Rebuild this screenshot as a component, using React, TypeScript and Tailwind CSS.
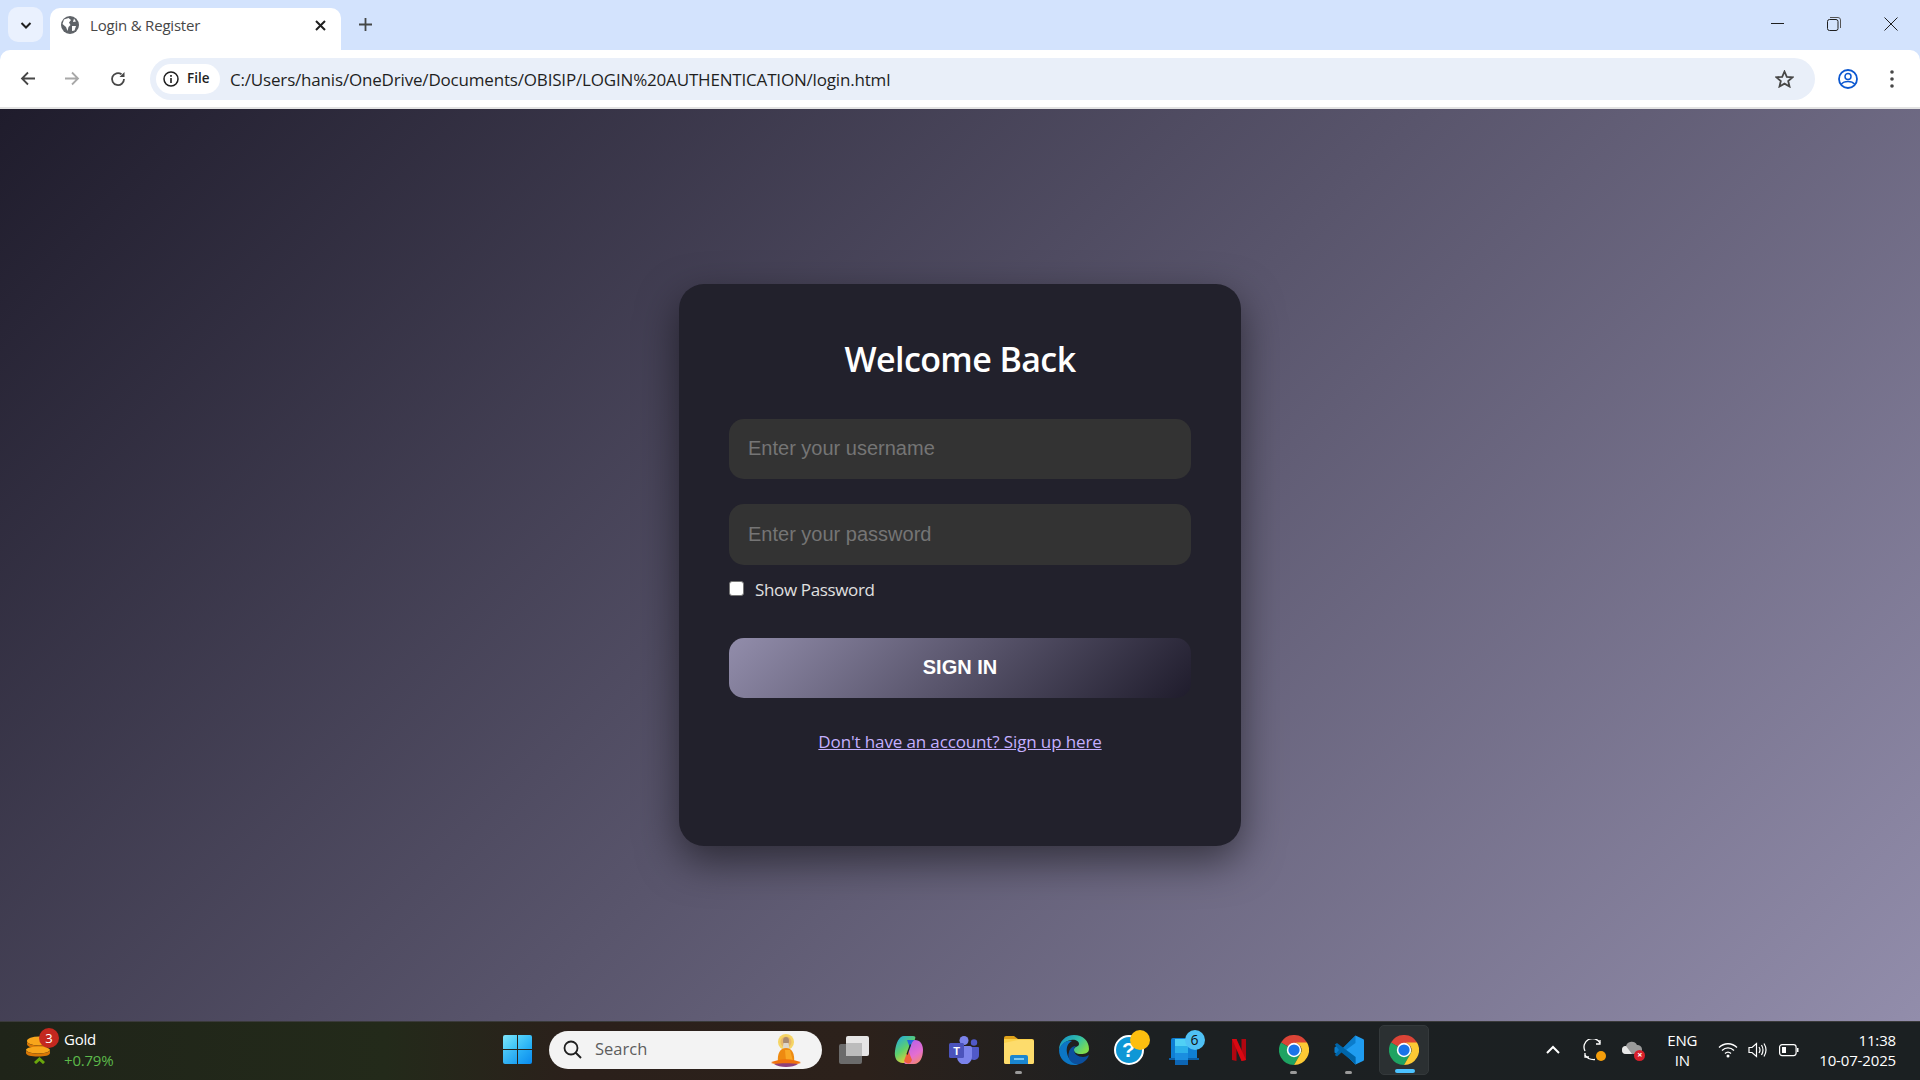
import React from "react";

const UI = "font-['Open_Sans','Noto_Sans',sans-serif]";

function ChromeIcon() {
  return (
    <svg width="30" height="30" viewBox="0 0 48 48">
      <path d="M24 24 L44.8 12 A24 24 0 0 0 3.2 12 Z" fill="#db4437" />
      <path d="M24 24 L3.2 12 A24 24 0 0 0 24 48 L36 27 Z" fill="#1ea362" />
      <path d="M24 12 L44.8 12 A24 24 0 0 1 24 48 L34.4 30 A12 12 0 0 0 24 12 Z" fill="#fcc934" />
      <circle cx="24" cy="24" r="11.5" fill="#fff" />
      <circle cx="24" cy="24" r="9" fill="#1a73e8" />
    </svg>
  );
}

function FolderIcon() {
  return (
    <svg width="30" height="28" viewBox="0 0 30 28">
      <path d="M0 2 a2 2 0 0 1 2-2 h8 l4 3 h-14z" fill="#e0a31b" />
      <path d="M0 3 h28 a2 2 0 0 1 2 2 v21 a2 2 0 0 1-2 2 h-26 a2 2 0 0 1-2-2z" fill="#fbd14b" />
      <path d="M0 7 l14-3 h14 a2 2 0 0 1 2 2 v20 a2 2 0 0 1-2 2 h-26 a2 2 0 0 1-2-2z" fill="#fddc6c" />
      <path d="M6 28 v-7 a2 2 0 0 1 2-2 h14 a2 2 0 0 1 2 2 v7z" fill="#1a86d0" />
      <rect x="10" y="22" width="10" height="2" fill="#7cc8f2" />
    </svg>
  );
}

function EdgeIcon() {
  return (
    <svg width="30" height="30" viewBox="0 0 30 30">
      <defs>
        <linearGradient id="edgeA" x1="0" y1="0" x2="1" y2="0.6">
          <stop offset="0" stopColor="#0f8bd0" />
          <stop offset="0.6" stopColor="#35c1a5" />
          <stop offset="1" stopColor="#7fdc4f" />
        </linearGradient>
      </defs>
      <path d="M15 0 C24 0 30 6 30 14 C30 18 26 19 22 19 C17 19 15 17 15 15 C15 11 20 12 20 9 C20 6 16 4 12 5 C6 6 2 10 0 15 C0 6 7 0 15 0Z" fill="url(#edgeA)" />
      <path d="M0 15 C2 8 8 5 13 6 C9 8 7 12 8 18 C9 24 14 29 20 29 C18 30 16 30 15 30 C6 30 0 23 0 15Z" fill="#0c76c4" />
      <path d="M15 15 C15 19 19 22 24 22 C26 22 28 21 30 20 C28 26 22 30 17 29 C11 28 8 22 10 17 C11 13 14 11 17 11 C15 12 15 14 15 15Z" fill="#0b4f9e" />
    </svg>
  );
}

function HelpIcon() {
  return (
    <div className="relative w-[30px] h-[30px]">
      <div className="w-[30px] h-[30px] rounded-full border-2 border-white bg-[#0e97d6] flex items-center justify-center text-white font-bold text-[21px] leading-none font-['Liberation_Sans',sans-serif]">?</div>
      <div className="absolute -top-[5px] left-[16px] w-5 h-5 rounded-full bg-[#fdbe0f]" />
    </div>
  );
}

function MailIcon() {
  return (
    <div className="relative w-[30px] h-[30px]">
      <svg width="30" height="30" viewBox="0 0 30 30">
        <rect x="2" y="3" width="26" height="22" rx="2" fill="#0f7fd4" />
        <rect x="0" y="23" width="30" height="2" fill="#0a5fa8" />
        <rect x="6" y="4" width="13" height="7" fill="#50d0f5" />
        <rect x="6" y="11" width="13" height="7" fill="#2bb0ea" />
        <rect x="6" y="18" width="13" height="7" fill="#1a8ee0" />
        <rect x="6" y="25" width="13" height="5" fill="#0d66b5" />
      </svg>
      <div className="absolute -top-[5px] left-[16px] w-5 h-5 rounded-full bg-[#4fc1f5] text-[#111] text-[14px] leading-5 text-center font-['Open_Sans',sans-serif]">6</div>
    </div>
  );
}

function NetflixIcon() {
  return (
    <svg width="14" height="22" viewBox="0 0 14 22">
      <path d="M0 0 h4.5 v22 l-4.5 -1z" fill="#b00610" />
      <path d="M9.5 0 h4.5 v21 l-4.5 1z" fill="#b00610" />
      <path d="M0 0 h4.5 L14 21 l-4.5 1z" fill="#d90812" />
    </svg>
  );
}

function VSCodeIcon() {
  return (
    <svg width="30" height="30" viewBox="0 0 30 30">
      <path d="M21.5 0.5 L29 4 a1.5 1.5 0 0 1 1 1.4 v19.2 a1.5 1.5 0 0 1-1 1.4 L21.5 29.5 L7 15z" fill="#1f9cf0" />
      <path d="M21.5 0.5 L7 15 L2.5 11 L0.5 12.5 v5 L2.5 19 L7 15 L21.5 29.5 V22 L12 15 L21.5 8z" fill="#0a7ccb" />
      <path d="M0.8 9.5 L3 8 L21.5 22 V29.5 L18 26 L7.5 17.5 L3 21.5 L0.8 20 L5 15z" fill="#0065a9" />
    </svg>
  );
}

function TaskViewIcon() {
  return (
    <div className="relative w-[30px] h-[28px]">
      <div className="absolute left-0 bottom-0 w-[23px] h-[20px] rounded-[2px] bg-[#6b6b6b]" />
      <div className="absolute right-0 top-0 w-[23px] h-[20px] rounded-[2px] bg-[#f0f0f0] opacity-95" />
      <div className="absolute left-[7px] top-[7px] w-[16px] h-[13px] bg-[#bcbcbc]" />
    </div>
  );
}

function CopilotIcon() {
  return (
    <svg width="30" height="28" viewBox="0 0 30 28">
      <defs>
        <linearGradient id="coA" x1="0" y1="0" x2="0.6" y2="1">
          <stop offset="0" stopColor="#1aa5ef" />
          <stop offset="0.55" stopColor="#5fd06a" />
          <stop offset="1" stopColor="#f8d030" />
        </linearGradient>
        <linearGradient id="coB" x1="0.3" y1="0" x2="0.8" y2="1">
          <stop offset="0" stopColor="#b760e8" />
          <stop offset="0.6" stopColor="#e56ed0" />
          <stop offset="1" stopColor="#f48a66" />
        </linearGradient>
      </defs>
      <path d="M10 0 h9 c2 0 3 1 2 3 L14 24 c-1 3-2 3-5 3 C3 27 0 22 1 15 C2 7 5 0 10 0Z" fill="url(#coA)" />
      <path d="M19 4 h2 c5 0 8 4 8 10 c0 7-3 14-9 14 h-8 c-2 0-2-2-1-3 L19 4Z" fill="url(#coB)" />
      <path d="M14 14 l-4 11 c2 3 6 3 7 1 l1-2z" fill="#f0603c" />
      <path d="M13 4 h9 c-3 0-4 2-5 5 l-1 3z" fill="#2266dd" />
      <path d="M17 9 L13.500 19 L12.500 18 L16 8z" fill="#1c1f22" />
    </svg>
  );
}

function TeamsIcon() {
  return (
    <svg width="30" height="28" viewBox="0 0 30 28">
      <circle cx="15" cy="4.5" r="4.5" fill="#7b83eb" />
      <circle cx="25" cy="6.5" r="3.2" fill="#5059c9" />
      <path d="M21 11 h8 a1 1 0 0 1 1 1 v7 a5 5 0 0 1-9 3z" fill="#5059c9" />
      <path d="M8 10 h13 a2 2 0 0 1 2 2 v9 a7.500 7.500 0 0 1-15 0z" fill="#7b83eb" />
      <rect x="0" y="7" width="15" height="15" rx="1.500" fill="#4b53bc" />
      <text x="7.500" y="18.500" textAnchor="middle" fontSize="11" fontWeight="700" fill="#fff" fontFamily="Liberation Sans">T</text>
    </svg>
  );
}

function WindowsLogo() {
  return (
    <div className="grid grid-cols-2 gap-[1.500px] w-[29px] h-[29px]">
      <div className="bg-[linear-gradient(135deg,#7fe5fb,#35c0f5)] rounded-tl-[2px]" />
      <div className="bg-[linear-gradient(135deg,#58d4fa,#1ba9f5)] rounded-tr-[2px]" />
      <div className="bg-[linear-gradient(135deg,#4dc8f8,#1c9ff0)] rounded-bl-[2px]" />
      <div className="bg-[linear-gradient(135deg,#2db5f7,#0a8aee)] rounded-br-[2px]" />
    </div>
  );
}

function MonkIcon() {
  return (
    <svg width="32" height="35" viewBox="0 0 32 35">
      <circle cx="16" cy="9" r="8" fill="#f5d565" />
      <circle cx="16" cy="9" r="5.500" fill="#e9b86a" />
      <ellipse cx="16" cy="8" rx="3" ry="4" fill="#a98a72" />
      <path d="M13.500 10 h5 l1 7 h-7z" fill="#ddd6cc" />
      <path d="M8 29 C7 21 10 15 16 15 C22 15 25 21 24 29z" fill="#ee8a10" />
      <path d="M15 17 h5 l3 11 h-7z" fill="#f9a825" />
      <path d="M1 30 C8 25 24 25 31 30 C24 32 8 32 1 30Z" fill="#f0720c" />
      <path d="M4 31 C10 30 22 30 28 31 C23 35 9 35 4 31Z" fill="#8c3f7a" />
    </svg>
  );
}

function GoldIcon() {
  return (
    <div className="relative w-[32px] h-[37px]">
      <svg width="26" height="36" viewBox="0 0 26 36" className="absolute left-0 -top-[3px]">
        <ellipse cx="14" cy="13" rx="12" ry="4.500" fill="#f8a51b" />
        <path d="M2 13 v3 c0 2.500 5 4.500 12 4.500 s12-2 12-4.500 v-3 c0 2.500-5 4.500-12 4.500 s-12-2-12-4.500z" fill="#d97706" />
        <ellipse cx="13" cy="22" rx="12" ry="3.500" fill="#f8a51b" />
        <path d="M1 22 v3 c0 2.500 5 3.500 12 3.500 s12-1 12-3.500 v-3 c0 2-5 3.500-12 3.500 s-12-1.500-12-3.500z" fill="#d97706" />
        <path d="M10 35 L14.500 31 L19 35" fill="none" stroke="#6aa70c" strokeWidth="3" />
      </svg>
      <div className="absolute left-[14px] -top-[3px] w-5 h-5 rounded-full bg-[#c4281f] text-white text-[13px] leading-5 text-center">3</div>
    </div>
  );
}

function Cell({ children, dot, active }: { children: React.ReactNode; dot?: boolean; active?: boolean }) {
  return (
    <div className={`relative w-[50px] h-[50px] mx-[2.500px] rounded-[5px] flex items-center justify-center ${active ? "bg-[#2b3032] border border-[#34393b]" : ""}`}>
      {children}
      {dot && <div className="absolute bottom-[1px] left-[21.500px] w-[7px] h-[3px] rounded-full bg-[#9a9a9a]" />}
      {active && <div className="absolute bottom-[1px] left-[15px] w-[20px] h-[3.500px] rounded-full bg-[#4cc2ff]" />}
    </div>
  );
}

export default function App() {
  return (
    <div className={`w-[1920px] h-[1080px] overflow-hidden flex flex-col ${UI}`}>
      {/* Tab strip */}
      <div className="h-[50px] shrink-0 bg-[#d3e3fd] flex items-end relative">
        <div className="w-[35px] h-[35px] ml-2 mb-[8px] rounded-[10px] bg-[#eaf1fe] flex items-center justify-center">
          <svg width="14" height="14" viewBox="0 0 14 14"><path d="M2.500 5 L7 9.500 L11.500 5" fill="none" stroke="#1f1f1f" strokeWidth="2" /></svg>
        </div>
        <div className="w-[291px] h-[42px] ml-[7px] bg-white rounded-t-[10px] flex items-center pl-[11px] pr-[14px] pb-[8px]">
          <svg width="18" height="18" viewBox="0 0 18 18">
            <circle cx="9" cy="9" r="9" fill="#5f6368" />
            <path d="M3 3.500 L7.500 2 L10 4 L8 6.500 L9.500 9 L7.500 11 L6.500 15 L5 11 L1.500 8z M11 10 h4 l-1.500 4.500 L11 15z M13 2.500 l2 3 l-3 .5z" fill="#fff" />
          </svg>
          <span className="ml-[11px] text-[15px] text-[#474747] tracking-[-0.2px]">Login &amp; Register</span>
          <svg className="ml-auto" width="13" height="13" viewBox="0 0 13 13"><path d="M2 2 L11 11 M11 2 L2 11" stroke="#1f1f1f" strokeWidth="2" /></svg>
        </div>
        <svg className="ml-[18px] mb-[19px]" width="13" height="13" viewBox="0 0 13 13"><path d="M6.500 0 V13 M0 6.500 H13" stroke="#444746" strokeWidth="1.800" /></svg>
        <div className="ml-auto h-[50px] flex items-center pr-[22px] gap-[43px] pb-[2px]">
          <svg width="13" height="2" viewBox="0 0 13 2"><rect width="13" height="1" fill="#1f1f1f" /></svg>
          <svg width="14" height="14" viewBox="0 0 14 14"><rect x="0.500" y="2.500" width="10.500" height="11" rx="2" fill="none" stroke="#1f1f1f" /><path d="M3 0.500 H11 a2.500 2.500 0 0 1 2.500 2.500 V11" fill="none" stroke="#555" /></svg>
          <svg width="14" height="14" viewBox="0 0 14 14"><path d="M0.500 0.500 L13.500 13.500 M13.500 0.500 L0.500 13.500" stroke="#1f1f1f" strokeWidth="1" /></svg>
        </div>
      </div>

      {/* Toolbar */}
      <div className="h-[59px] shrink-0 bg-[#d3e3fd]">
        <div className="h-[59px] bg-white rounded-t-[10px] border-b-2 border-[#e3e3e3] flex items-center">
          <div className="w-[150px] flex items-center pl-[20px] gap-[30px]">
            <svg width="15" height="15" viewBox="0 0 15 15"><path d="M15 7.500 H2 M8 1.500 L2 7.500 L8 13.500" fill="none" stroke="#474747" strokeWidth="1.800" /></svg>
            <svg width="15" height="15" viewBox="0 0 15 15"><path d="M0 7.500 H13 M7 1.500 L13 7.500 L7 13.500" fill="none" stroke="#a8a8a8" strokeWidth="1.800" /></svg>
            <svg width="16" height="16" viewBox="0 0 16 16"><path d="M14 8 A6 6 0 1 1 11.500 3.200" fill="none" stroke="#474747" strokeWidth="1.800" /><path d="M14.500 1 V6 H9.500z" fill="#474747" /></svg>
          </div>
          <div className="w-[1665px] h-[42px] rounded-full bg-[#e9eff9] flex items-center pl-[6px]">
            <div className="w-[64px] h-[30px] rounded-full bg-white flex items-center pl-[7px] gap-[8px]">
              <svg width="16" height="16" viewBox="0 0 16 16"><circle cx="8" cy="8" r="7" fill="none" stroke="#1f1f1f" strokeWidth="1.500" /><rect x="7.200" y="7" width="1.600" height="5" fill="#1f1f1f" /><rect x="7.200" y="4" width="1.600" height="1.800" fill="#1f1f1f" /></svg>
              <span className="text-[13.500px] font-semibold text-[#1f1f1f]">File</span>
            </div>
            <span className="ml-[10px] mt-[2px] text-[17px] text-[#1f1f1f] tracking-[-0.18px] whitespace-nowrap">C:/Users/hanis/OneDrive/Documents/OBISIP/LOGIN%20AUTHENTICATION/login.html</span>
            <svg className="ml-auto mr-[21px]" width="19" height="18" viewBox="0 0 19 18"><path d="M9.500 1.500 L11.800 6.800 L17.500 7.300 L13.200 11 L14.500 16.500 L9.500 13.600 L4.500 16.500 L5.800 11 L1.500 7.300 L7.200 6.800z" fill="none" stroke="#474747" strokeWidth="1.800" /></svg>
          </div>
          <svg className="ml-[23px]" width="20" height="20" viewBox="0 0 20 20">
            <circle cx="10" cy="10" r="9" fill="none" stroke="#0b57d0" strokeWidth="1.800" />
            <circle cx="10" cy="7.500" r="3" fill="none" stroke="#0b57d0" strokeWidth="1.500" />
            <path d="M3.500 15 C6 11.500 14 11.500 16.500 15" fill="none" stroke="#0b57d0" strokeWidth="1.500" />
          </svg>
          <svg className="ml-[32px]" width="4" height="18" viewBox="0 0 4 18"><circle cx="2" cy="2" r="1.800" fill="#474747" /><circle cx="2" cy="9" r="1.800" fill="#474747" /><circle cx="2" cy="16" r="1.800" fill="#474747" /></svg>
        </div>
      </div>

      {/* Page */}
      <main className="flex-1 bg-[linear-gradient(135deg,#1f1c2c,#928dab)] flex items-center justify-center">
        <div className="w-[562px] h-[562px] rounded-[25px] bg-[#22212c] px-[50px] pt-[50px] shadow-[0_15px_40px_rgba(0,0,0,0.5)] flex flex-col">
          <h1 className="h-[50px] text-center text-[34px] leading-[50px] font-semibold text-white tracking-[-0.6px]">Welcome Back</h1>
          <div className="mt-[35px] h-[60px] rounded-[15px] bg-[#333333] flex items-center pl-[19px] pb-[2px] text-[20px] text-[#757575] font-['Liberation_Sans',sans-serif]">Enter your username</div>
          <div className="mt-[25px] h-[61px] rounded-[15px] bg-[#333333] flex items-center pl-[19px] pb-[2px] text-[20px] text-[#757575] font-['Liberation_Sans',sans-serif]">Enter your password</div>
          <div className="mt-[15px] h-[20px] flex items-center">
            <div className="w-[15px] h-[15px] mb-[3px] rounded-[3px] bg-white border border-[#767676]" />
            <span className="ml-[11px] text-[17px] text-[#e0e0e0] tracking-[-0.35px]">Show Password</span>
          </div>
          <div className="mt-[38px] h-[60px] rounded-[15px] bg-[linear-gradient(135deg,#928dab,#1f1c2c)] flex items-center justify-center pb-[3px] text-[20px] font-bold text-white font-['Liberation_Sans',sans-serif]">SIGN IN</div>
          <a href="#" className="mt-[31px] text-center text-[17px] text-[#c4b0ff] underline tracking-[-0.13px]">Don&apos;t have an account? Sign up here</a>
        </div>
      </main>

      {/* Taskbar */}
      <div className="h-[59px] shrink-0 pb-[3px] grid grid-cols-[1fr_auto_1fr] items-center bg-[linear-gradient(90deg,#1f2419,#232a1a_20%,#2b201b_30%,#2c211b_45%,#1c2022_60%,#1b2022)] border-t border-[#3a3a3a]">
        <div className="flex items-center pl-[25px]">
          <GoldIcon />
          <div className="ml-[7px] flex flex-col">
            <span className="text-[15px] leading-[20px] text-white tracking-[-0.2px]">Gold</span>
            <span className="mt-[1px] text-[15px] leading-[20px] text-[#5cb94a] tracking-[-0.2px]">+0.79%</span>
          </div>
        </div>

        <div className="flex items-center ml-[1px]">
          <Cell><WindowsLogo /></Cell>
          <div className="ml-[4px] mr-[4px] w-[273px] h-[38px] rounded-full bg-[#f3f3f3] flex items-center pl-[14px] relative">
            <svg width="19" height="19" viewBox="0 0 19 19"><circle cx="8" cy="8" r="6.500" fill="none" stroke="#1f1f1f" strokeWidth="1.800" /><path d="M12.500 12.500 L18 18" stroke="#1f1f1f" strokeWidth="2" /></svg>
            <span className="ml-[13px] text-[16.500px] text-[#5d5d5d]">Search</span>
            <div className="absolute right-[20px] top-[2px]"><MonkIcon /></div>
          </div>
          <Cell><TaskViewIcon /></Cell>
          <Cell><CopilotIcon /></Cell>
          <Cell><TeamsIcon /></Cell>
          <Cell dot><FolderIcon /></Cell>
          <Cell><EdgeIcon /></Cell>
          <Cell><HelpIcon /></Cell>
          <Cell><MailIcon /></Cell>
          <Cell><NetflixIcon /></Cell>
          <Cell dot><ChromeIcon /></Cell>
          <Cell dot><VSCodeIcon /></Cell>
          <Cell active><ChromeIcon /></Cell>
        </div>

        <div className="flex items-center justify-end pr-[24px] text-white">
          <svg width="14" height="9" viewBox="0 0 14 9"><path d="M1 8 L7 2 L13 8" fill="none" stroke="#fff" strokeWidth="2" /></svg>
          <div className="relative ml-[23px] w-[22px] h-[22px]">
            <svg width="22" height="22" viewBox="0 0 22 22">
              <path d="M2 12 A8.500 8.500 0 0 1 17 4" fill="none" stroke="#fff" strokeWidth="1.300" />
              <path d="M17 1 V5 H13" fill="none" stroke="#fff" strokeWidth="1.300" />
              <path d="M2 16 Q5 21 12 20.500" fill="none" stroke="#fff" strokeWidth="1.300" />
              <path d="M2 14 V18 H6" fill="none" stroke="#fff" strokeWidth="1.300" />
            </svg>
            <div className="absolute right-[-1px] bottom-[0px] w-[10px] h-[10px] rounded-full bg-[#f59e0b]" />
          </div>
          <div className="relative ml-[17px] w-[22px] h-[18px]">
            <svg width="20" height="14" viewBox="0 0 20 14"><path d="M4 13 a4 4 0 0 1 0-8 a6 6 0 0 1 11-1 a4.500 4.500 0 0 1 1 9z" fill="#9a9a9a" /><path d="M4 13 a4 4 0 0 1 0-8 l6 8z" fill="#e8e8e8" /></svg>
            <div className="absolute right-[-1px] bottom-[-2px] w-[11px] h-[11px] rounded-full bg-[#d9202c] text-white text-[9px] leading-[10px] text-center font-bold">×</div>
          </div>
          <div className="ml-[20px] w-[36px] flex flex-col items-center text-[15px] leading-[20px] tracking-[-0.2px]">
            <span>ENG</span>
            <span>IN</span>
          </div>
          <svg className="ml-[18px]" width="20" height="16" viewBox="0 0 20 16"><path d="M1 5.500 C6 0.500 14 0.500 19 5.500 M4 8.500 C7.500 5 12.500 5 16 8.500 M7 11.500 C8.800 9.800 11.200 9.800 13 11.500" fill="none" stroke="#fff" strokeWidth="1.300" /><circle cx="10" cy="14" r="1.500" fill="#fff" /></svg>
          <svg className="ml-[10px]" width="20" height="16" viewBox="0 0 20 16"><path d="M1 5.500 H4 L8.500 1.500 V14.500 L4 10.500 H1z" fill="none" stroke="#fff" strokeWidth="1.200" /><path d="M11 5 Q13 8 11 11 M13.500 3 Q16.500 8 13.500 13 M16 1.500 Q20 8 16 14.500" fill="none" stroke="#fff" strokeWidth="1.200" /></svg>
          <svg className="ml-[11px]" width="20" height="14" viewBox="0 0 20 14"><rect x="0.600" y="1.600" width="16.500" height="11" rx="2.500" fill="none" stroke="#fff" strokeWidth="1.200" /><rect x="3" y="4" width="4" height="6" fill="#fff" /><rect x="18" y="5" width="1.500" height="4" fill="#fff" /></svg>
          <div className="ml-[20px] flex flex-col items-end text-[15px] leading-[20px] tracking-[-0.15px]">
            <span>11:38</span>
            <span>10-07-2025</span>
          </div>
        </div>
      </div>
    </div>
  );
}
